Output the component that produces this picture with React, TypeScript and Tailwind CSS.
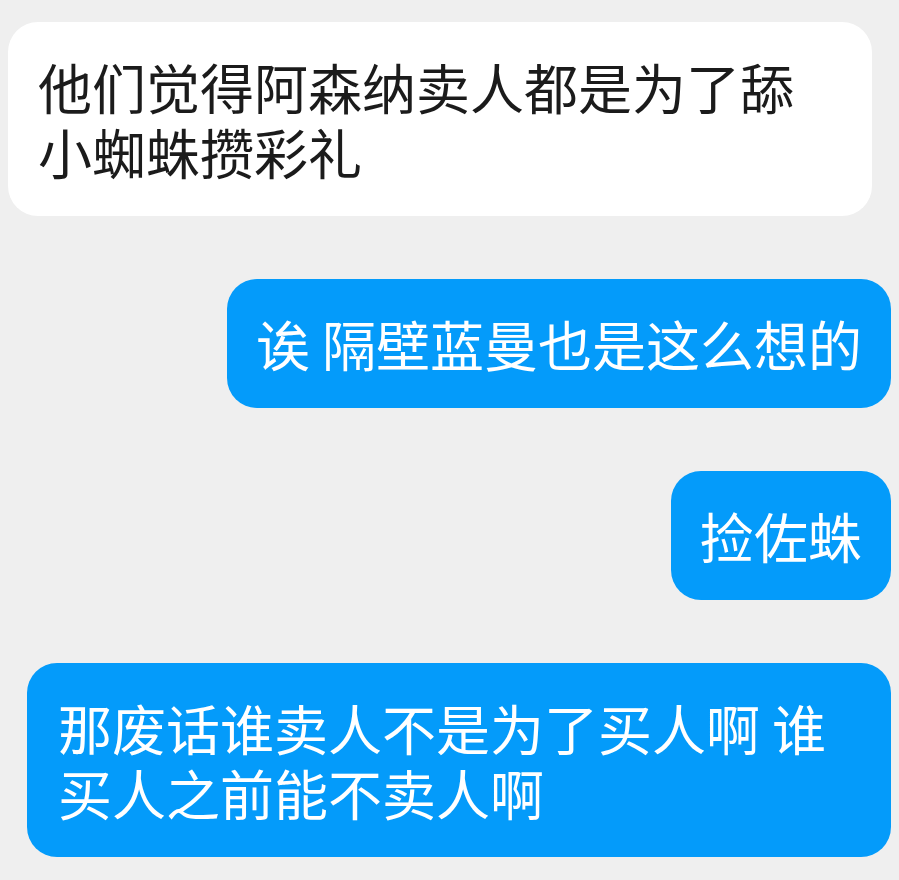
import React from "react";

const font = { fontFamily: '"Noto Sans CJK SC", "Noto Sans", sans-serif' };

export default function App() {
  return (
    <div className="min-h-[880px] w-full bg-[#efefef] px-[8px] pt-[22px]" style={font}>
      <div className="flex flex-col gap-[63px]">
        <div className="flex justify-start">
          <div className="max-w-[864px] rounded-[30px] bg-white px-[30px] py-[32px] text-[54px] leading-[65px] text-[#1b1b1b]">
            他们觉得阿森纳卖人都是为了舔小蜘蛛攒彩礼
          </div>
        </div>
        <div className="flex justify-end">
          <div className="max-w-[864px] rounded-[30px] bg-[#049bfa] px-[29px] py-[32px] text-[54px] leading-[65px] text-white">
            诶 隔壁蓝曼也是这么想的
          </div>
        </div>
        <div className="flex justify-end">
          <div className="max-w-[864px] rounded-[30px] bg-[#049bfa] px-[29px] py-[32px] text-[54px] leading-[65px] text-white">
            捡佐蛛
          </div>
        </div>
        <div className="flex justify-end">
          <div className="max-w-[864px] rounded-[30px] bg-[#049bfa] pl-[31px] pr-[29px] py-[32px] text-[54px] leading-[65px] text-white">
            那废话谁卖人不是为了买人啊 谁买人之前能不卖人啊
          </div>
        </div>
      </div>
    </div>
  );
}
